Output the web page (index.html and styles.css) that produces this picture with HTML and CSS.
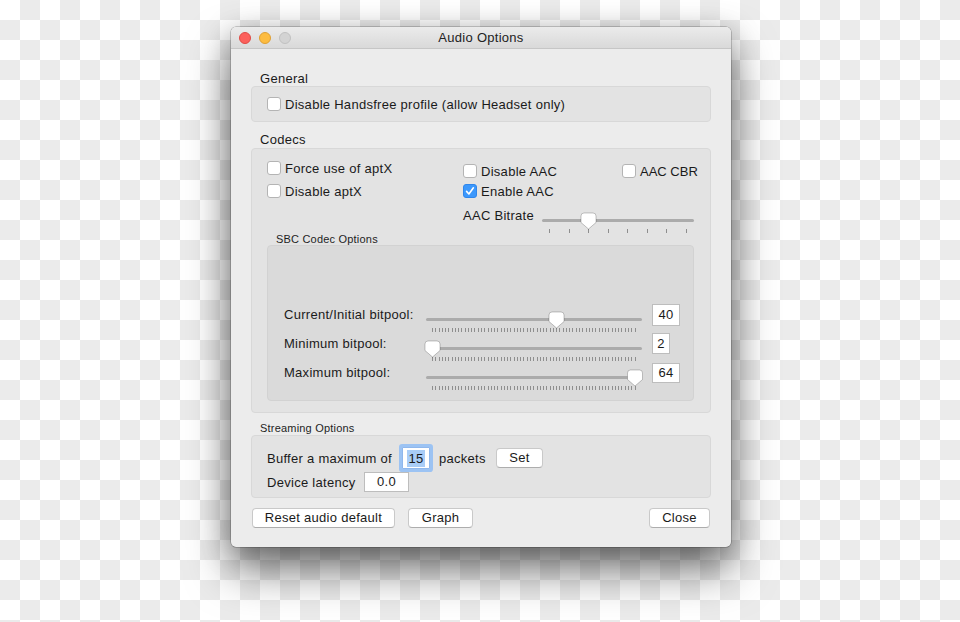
FILE: index.html
```html
<!DOCTYPE html>
<html>
<head>
<meta charset="utf-8">
<title>Audio Options</title>
<link rel="stylesheet" href="styles.css">
</head>
<body>
<div class="window">
  <div class="titlebar">
    <div class="lights">
      <span class="light red"></span>
      <span class="light yellow"></span>
      <span class="light gray"></span>
    </div>
    <div class="title">Audio Options</div>
    <div></div>
  </div>

  <div class="content">
    <div class="section-label">General</div>
    <div class="group general">
      <label class="check"><span class="box"></span>Disable Handsfree profile (allow Headset only)</label>
    </div>

    <div class="section-label codecs-label">Codecs</div>
    <div class="group codecs">
      <div class="codec-top">
        <div class="col1">
          <label class="check"><span class="box"></span>Force use of aptX</label>
          <label class="check"><span class="box"></span>Disable aptX</label>
        </div>
        <div class="rightcol">
          <div class="aac-checks">
            <div class="col2">
              <label class="check"><span class="box"></span>Disable AAC</label>
              <label class="check"><span class="box checked"><svg width="14" height="14" viewBox="0 0 14 14"><path d="M3.6 7.4l2.3 2.6 4.5-6.2" fill="none" stroke="#fff" stroke-width="1.6" stroke-linecap="round" stroke-linejoin="round"/></svg></span>Enable AAC</label>
            </div>
            <div class="col3">
              <label class="check cbr"><span class="box"></span>AAC CBR</label>
            </div>
          </div>
          <div class="aac-row">
            <span class="aac-label">AAC Bitrate</span>
            <svg class="aac-slider" width="157" height="32" viewBox="0 0 157 32">
              <line x1="5.5" y1="19.5" x2="154.5" y2="19.5" stroke="#ababab" stroke-width="3" stroke-linecap="round"/>
              <path d="M11.5 28v4M31.5 28v4M50.5 28v4M70.5 28v4M89.5 28v4M109.5 28v4M128.5 28v4M148.5 28v4" stroke="#8e8e8e" stroke-width="1"/>
              <path transform="translate(50.5 12)" d="M-7.5 3a3 3 0 0 1 3-3h9a3 3 0 0 1 3 3v6.5l-7.5 6.5l-7.5-6.5z" fill="#fff" stroke="rgba(0,0,0,0.28)" stroke-width="0.8"/>
            </svg>
          </div>
        </div>
      </div>
      <div class="sub-label">SBC Codec Options</div>
      <div class="group inner">
        <div class="bp-row">
          <span class="bp-label">Current/Initial bitpool:</span>
          <svg class="bp-slider" width="224" height="29" viewBox="0 0 224 29">
            <defs>
              <path id="bpticks" d="M10.5 28v4M13.5 28v4M17.5 28v4M20.5 28v4M23.5 28v4M26.5 28v4M30.5 28v4M33.5 28v4M36.5 28v4M39.5 28v4M43.5 28v4M46.5 28v4M49.5 28v4M52.5 28v4M56.5 28v4M59.5 28v4M62.5 28v4M66.5 28v4M69.5 28v4M72.5 28v4M75.5 28v4M79.5 28v4M82.5 28v4M85.5 28v4M88.5 28v4M92.5 28v4M95.5 28v4M98.5 28v4M101.5 28v4M105.5 28v4M108.5 28v4M111.5 28v4M115.5 28v4M118.5 28v4M121.5 28v4M124.5 28v4M128.5 28v4M131.5 28v4M134.5 28v4M137.5 28v4M141.5 28v4M144.5 28v4M147.5 28v4M150.5 28v4M154.5 28v4M157.5 28v4M160.5 28v4M164.5 28v4M167.5 28v4M170.5 28v4M173.5 28v4M177.5 28v4M180.5 28v4M183.5 28v4M186.5 28v4M190.5 28v4M193.5 28v4M196.5 28v4M199.5 28v4M203.5 28v4M206.5 28v4M209.5 28v4M213.5 28v4" stroke="#8e8e8e" stroke-width="1"/>
              <path id="thumb" d="M-7.5 3a3 3 0 0 1 3-3h9a3 3 0 0 1 3 3v6.5l-7.5 6.5l-7.5-6.5z" fill="#fff" stroke="rgba(0,0,0,0.28)" stroke-width="0.8"/>
            </defs>
            <line x1="5.5" y1="19.5" x2="218.5" y2="19.5" stroke="#ababab" stroke-width="3" stroke-linecap="round"/>
            <use href="#bpticks"/>
            <use href="#thumb" transform="translate(134.5 12)"/>
          </svg>
          <span class="num w28 h22">40</span>
        </div>
        <div class="bp-row">
          <span class="bp-label">Minimum bitpool:</span>
          <svg class="bp-slider" width="224" height="29" viewBox="0 0 224 29">
            <line x1="5.5" y1="19.5" x2="218.5" y2="19.5" stroke="#ababab" stroke-width="3" stroke-linecap="round"/>
            <use href="#bpticks"/>
            <use href="#thumb" transform="translate(10.5 12)"/>
          </svg>
          <span class="num w18 h21">2</span>
        </div>
        <div class="bp-row">
          <span class="bp-label">Maximum bitpool:</span>
          <svg class="bp-slider" width="224" height="29" viewBox="0 0 224 29">
            <line x1="5.5" y1="19.5" x2="218.5" y2="19.5" stroke="#ababab" stroke-width="3" stroke-linecap="round"/>
            <use href="#bpticks"/>
            <use href="#thumb" transform="translate(213 12)"/>
          </svg>
          <span class="num w28 h20">64</span>
        </div>
      </div>
    </div>

    <div class="sub-label stream-label">Streaming Options</div>
    <div class="group streaming">
      <div class="s-row r1">
        <span class="s-label buf">Buffer a maximum of</span>
        <span class="field focus"><span class="sel">15</span></span>
        <span class="s-label packets">packets</span>
        <span class="btn set">Set</span>
      </div>
      <div class="s-row r2">
        <span class="s-label lat">Device latency</span>
        <span class="field latency">0.0</span>
      </div>
    </div>

    <div class="buttons">
      <span class="btn reset">Reset audio default</span>
      <span class="btn graph">Graph</span>
      <span class="btn close">Close</span>
    </div>
  </div>
</div>
</body>
</html>
```

FILE: styles.css
```css
html, body {
  margin: 0;
  padding: 0;
}
body {
  width: 960px;
  height: 622px;
  overflow: hidden;
  background: repeating-conic-gradient(#ebebeb 0 25%, #ffffff 0 50%) 0 0 / 40px 40px;
  font-family: "Liberation Sans", Arial, sans-serif;
  font-size: 13px;
  letter-spacing: 0.28px;
  color: #1a1a1a;
}
.window {
  margin: 27px 0 0 231px;
  width: 500px;
  height: 520px;
  background: #ececec;
  border-radius: 5px;
  box-shadow: 0 0 0 0.5px rgba(0,0,0,0.35), 0 24px 44px rgba(0,0,0,0.5), 0 6px 30px rgba(0,0,0,0.25);
  overflow: hidden;
}
.titlebar {
  height: 21px;
  border-bottom: 1px solid #c6c6c6;
  background: linear-gradient(#ebebeb, #d9d9d9);
  display: grid;
  grid-template-columns: 1fr auto 1fr;
  align-items: center;
}
.lights {
  display: flex;
  gap: 8px;
  padding-left: 8px;
}
.light {
  width: 12px;
  height: 12px;
  border-radius: 50%;
  box-sizing: border-box;
}
.light.red { background: #fc605c; border: 0.5px solid #de4a45; }
.light.yellow { background: #fdbc40; border: 0.5px solid #dfa033; }
.light.gray { background: #d3d3d3; border: 0.5px solid #c1c1c1; }
.title {
  font-size: 13px;
  color: #222;
  line-height: 16px;
  padding-top: 1px;
}
.content {
  padding: 21px 20px 0 20px;
}
.section-label {
  line-height: 16px;
  padding-left: 9px;
  padding-top: 1px;
  height: 15px;
}
.codecs-label {
  margin-top: 9px;
}
.group {
  background: #e3e3e3;
  border: 1px solid #d8d8d8;
  border-radius: 4px;
  box-sizing: border-box;
}
.general {
  height: 36px;
  display: flex;
  align-items: center;
  padding: 0 15px;
}
.check {
  display: flex;
  align-items: center;
  height: 20px;
  gap: 4px;
  white-space: nowrap;
  line-height: 16px;
  padding-top: 1px;
  box-sizing: border-box;
}
.check.cbr {
  letter-spacing: 0;
}
.box {
  width: 14px;
  height: 14px;
  box-sizing: border-box;
  background: #fff;
  border: 1px solid #b4b4b4;
  border-radius: 3px;
  display: block;
  flex: none;
  margin-top: -1px;
}
.box.checked {
  background: #3c98fc;
  border-color: #2f86eb;
  position: relative;
}
.box.checked svg {
  position: absolute;
  left: -1px;
  top: -1px;
}
.codecs {
  margin-top: 1px;
  height: 265px;
  padding: 9px 16px 0 15px;
}
.codec-top {
  display: flex;
  height: 75px;
}
.col1 {
  width: 196px;
  flex: none;
  display: flex;
  flex-direction: column;
  gap: 3px;
}
.rightcol {
  width: 232px;
  flex: none;
  margin-top: 3px;
  display: flex;
  flex-direction: column;
}
.aac-checks {
  display: flex;
}
.col2 {
  width: 159px;
  flex: none;
  display: flex;
  flex-direction: column;
}
.col3 {
  flex: none;
}
.aac-row {
  display: flex;
  align-items: flex-start;
  height: 32px;
}
.aac-label {
  margin-top: 7px;
  line-height: 16px;
}
.aac-slider {
  margin-left: auto;
  overflow: visible;
  display: block;
  flex: none;
}
.sub-label {
  font-size: 11px;
  line-height: 12px;
  height: 12px;
  padding-left: 9px;
  color: #1e1e1e;
  letter-spacing: 0.2px;
}
.inner {
  width: 427px;
  height: 156px;
  background: #dadada;
  border-color: #d2d2d2;
  padding: 54px 0 0 16px;
}
.bp-row {
  display: flex;
  align-items: center;
  height: 29px;
}
.bp-label {
  width: 138px;
  flex: none;
  line-height: 16px;
  padding-top: 1px;
}
.bp-slider {
  display: block;
  overflow: visible;
  flex: none;
}
.num {
  margin-left: 6px;
  background: #fff;
  border: 1px solid #bdbdbd;
  box-sizing: border-box;
  display: flex;
  align-items: center;
  justify-content: center;
  line-height: 16px;
  flex: none;
}
.w28 { width: 28px; }
.w18 { width: 18px; }
.h22 { height: 22px; }
.h21 { height: 21px; }
.h20 { height: 20px; }
.stream-label {
  margin-top: 8px;
  height: 14px;
  line-height: 14px;
}
.streaming {
  height: 63px;
  padding: 8px 15px 0 15px;
}
.s-row {
  display: flex;
  align-items: center;
}
.r1 { height: 28px; }
.r2 { height: 20px; }
.s-label {
  line-height: 16px;
  white-space: nowrap;
  padding-top: 1px;
  flex: none;
}
.buf { width: 135px; }
.packets { width: 57px; margin-left: 9px; }
.lat { width: 97px; }
.field {
  background: #fff;
  border: 1px solid #bdbdbd;
  box-sizing: border-box;
  display: flex;
  align-items: center;
  justify-content: center;
  line-height: 16px;
  flex: none;
}
.focus {
  width: 28px;
  height: 22px;
  border-color: #8fb7ec;
  border-radius: 1px;
  box-shadow: 0 0 0 3px #9cc3f3;
}
.sel {
  background: #a9cdf7;
  padding: 0 1px;
  line-height: 17px;
}
.latency {
  width: 45px;
  height: 20px;
}
.btn {
  display: flex;
  align-items: center;
  justify-content: center;
  height: 20px;
  box-sizing: border-box;
  background: #fff;
  border: 1px solid #c9c9c9;
  border-bottom-color: #adadad;
  border-radius: 4px;
  line-height: 16px;
  white-space: nowrap;
  flex: none;
}
.set { width: 47px; }
.buttons {
  display: flex;
  margin-top: 10px;
  padding: 0 1px;
}
.reset { width: 143px; }
.graph { width: 65px; margin-left: 13px; }
.close { width: 61px; margin-left: auto; }
```
